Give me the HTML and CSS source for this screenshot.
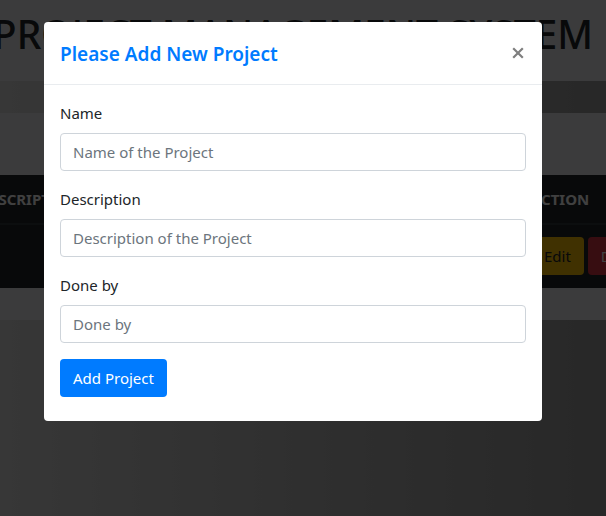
FILE: index.html
```html
<!DOCTYPE html>
<html lang="en">
<head>
<meta charset="utf-8">
<meta name="viewport" content="width=device-width, initial-scale=1">
<title>Project Management System</title>
<link rel="stylesheet" href="styles.css">
</head>
<body>
<div class="page">
  <div class="content">
    <header class="banner"><h1>PROJECT MANAGEMENT SYSTEM</h1></header>
    <main class="card">
      <table class="projects">
        <thead>
          <tr><th class="col-id">ID</th><th>DESCRIPTION</th><th>DONE BY</th><th class="col-action">ACTION</th></tr>
        </thead>
        <tbody>
          <tr>
            <td></td><td></td><td></td>
            <td><div class="actions"><button type="button" class="btn btn-warning">Edit</button><button type="button" class="btn btn-danger">Delete</button></div></td>
          </tr>
        </tbody>
      </table>
    </main>
  </div>
</div>
<div class="backdrop">
  <section class="modal" role="dialog" aria-labelledby="modal-title">
    <div class="modal-header">
      <h2 id="modal-title">Please Add New Project</h2>
      <button type="button" class="close" aria-label="Close">
        <svg viewBox="0 0 12 12" width="12" height="12" aria-hidden="true"><path d="M1.2 1.2 10.8 10.8M10.8 1.2 1.2 10.8"/></svg>
      </button>
    </div>
    <form class="modal-body">
      <div class="field">
        <label for="name">Name</label>
        <input id="name" type="text" placeholder="Name of the Project">
      </div>
      <div class="field">
        <label for="description">Description</label>
        <input id="description" type="text" placeholder="Description of the Project">
      </div>
      <div class="field">
        <label for="done-by">Done by</label>
        <input id="done-by" type="text" placeholder="Done by">
      </div>
      <button type="button" class="btn btn-primary">Add Project</button>
    </form>
  </section>
</div>
</body>
</html>
```
FILE: styles.css
```css
* {
  box-sizing: border-box;
}

body {
  margin: 0;
  color: #212529;
  font: 15px/24px "Segoe UI", "Noto Sans", sans-serif;
}

h1,
h2 {
  margin: 0;
  font-weight: 600;
}

input,
button {
  font: inherit;
}

.page {
  min-height: 100vh;
  overflow: hidden;
  background: linear-gradient(to right, #dadada, #9e9e9e);
}

/* The content is wider than the window and runs off both sides */
.content {
  display: flex;
  flex-direction: column;
  gap: 32px;
  width: calc(100% + 180px);
  margin-left: -100px;
}

.banner {
  padding: 10px 0 23px;
  background: #e9ecef;
  text-align: center;
  white-space: nowrap;
}

.banner h1 {
  font-size: 39px;
  font-weight: 550;
  line-height: 48px;
}

.card {
  padding: 62px 0 32px;
  background: #e9ecef;
}

.projects {
  width: 100%;
  table-layout: fixed;
  border-collapse: separate;
  border-spacing: 0;
  background: #212529;
  color: #fff;
  text-align: left;
}

.projects th,
.projects td {
  padding: 12px;
}

.projects th {
  border-bottom: 2px solid #32383e;
}

.projects td {
  padding-bottom: 13px;
}

.col-id {
  width: 67px;
}

.col-action {
  width: 167px;
}

.actions {
  display: flex;
  gap: 4px;
}

.btn {
  padding: 6px 12px;
  border: 1px solid transparent;
  border-radius: 4px;
  line-height: 24px;
}

.btn-warning {
  background: #ffc107;
  color: #212529;
}

.btn-danger {
  background: #dc3545;
  color: #fff;
}

.btn-primary {
  background: #007bff;
  color: #fff;
}

.backdrop {
  position: fixed;
  inset: 0;
  padding: 22px 64px 22px 44px;
  background: rgba(0, 0, 0, 0.75);
}

.modal {
  border-radius: 4px;
  background: #fff;
}

.modal-header {
  display: flex;
  align-items: center;
  justify-content: space-between;
  padding: 16px;
  border-bottom: 1px solid #e9ecef;
}

.modal-header h2 {
  color: #007bff;
  font-size: 19px;
  line-height: 32px;
  margin-bottom: -2px;
}

.close {
  display: flex;
  padding: 2px;
  border: 0;
  background: none;
}

.close path {
  fill: none;
  stroke: #7f7f7f;
  stroke-width: 2.2;
}

.modal-body {
  padding: 16px 16px 24px;
}

.field {
  display: flex;
  flex-direction: column;
  gap: 8px;
  margin-bottom: 16px;
}

.field input {
  width: 100%;
  padding: 6px 12px;
  border: 1px solid #ced4da;
  border-radius: 4px;
  background: #fff;
  color: #495057;
  height: 38px;
}

.field input::placeholder {
  color: #6c757d;
  opacity: 1;
}
```
